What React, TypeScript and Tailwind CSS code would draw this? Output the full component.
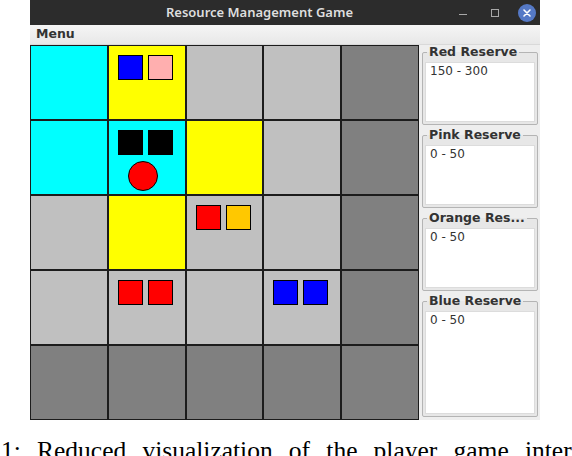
import React from 'react';

type Piece = 'red' | 'pink' | 'orange' | 'blue' | 'black';

const CELL_BG: Record<string, string> = {
  c: 'bg-[#00ffff]',
  y: 'bg-[#ffff00]',
  l: 'bg-[#c0c0c0]',
  g: 'bg-[#808080]',
};

const PIECE_BG: Record<Piece, string> = {
  red: 'bg-[#ff0000] border border-black',
  pink: 'bg-[#ffafaf] border border-black',
  orange: 'bg-[#ffc800] border border-black',
  blue: 'bg-[#0000ff] border border-black',
  black: 'bg-black',
};

const BOARD = [
  ['c', 'y', 'l', 'l', 'g'],
  ['c', 'c', 'y', 'l', 'g'],
  ['l', 'y', 'l', 'l', 'g'],
  ['l', 'l', 'l', 'l', 'g'],
  ['g', 'g', 'g', 'g', 'g'],
];

// pieces on a cell, keyed "row-col"
const PIECES: Record<string, { squares: Piece[]; unit?: boolean }> = {
  '0-1': { squares: ['blue', 'pink'] },
  '1-1': { squares: ['black', 'black'], unit: true },
  '2-2': { squares: ['red', 'orange'] },
  '3-1': { squares: ['red', 'red'] },
  '3-3': { squares: ['blue', 'blue'] },
};

const RESERVES = [
  { title: 'Red Reserve', value: '150 - 300' },
  { title: 'Pink Reserve', value: '0 - 50' },
  { title: 'Orange Res...', value: '0 - 50' },
  { title: 'Blue Reserve', value: '0 - 50' },
];

function Cell({ kind, row, col }: { kind: string; row: number; col: number }) {
  const content = PIECES[`${row}-${col}`];
  return (
    <div className={`${CELL_BG[kind]} border border-[#1c1c1c] pl-[9px] pt-[9px]`}>
      {content ? (
        <>
          <div className="flex gap-[5px]">
            {content.squares.map((p, i) => (
              <div key={i} className={`h-[25px] w-[25px] ${PIECE_BG[p]}`} />
            ))}
          </div>
          {content.unit ? (
            <div className="ml-[10px] mt-[6px] h-[30px] w-[30px] rounded-full border border-black bg-[#ff0000]" />
          ) : null}
        </>
      ) : null}
    </div>
  );
}

function Reserve({ title, value, grow }: { title: string; value: string; grow?: boolean }) {
  return (
    <fieldset
      className={`flex flex-col rounded-[2px] border border-[#b4b4b4] bg-[#e7e7e7] ${grow ? 'flex-1' : 'h-[80px]'}`}
    >
      <legend className="ml-[4px] px-[2px] text-[12.5px] font-bold leading-[14px] text-[#333]">{title}</legend>
      <div
        className={`mx-[2px] mb-[2px] mt-[3px] border border-[#dcdcdc] bg-white px-[4px] pt-[1px] text-[12px] leading-[14px] text-[#333] ${
          grow ? 'flex-1' : 'h-[60px]'
        }`}
      >
        {value}
      </div>
    </fieldset>
  );
}

export default function App() {
  return (
    <div className="h-[456px] w-[572px] overflow-hidden bg-white font-['DejaVu_Sans',sans-serif]">
      <div className="ml-[30px] w-[510px]">
        {/* title bar */}
        <div className="flex h-[25px] items-center bg-[#2c2c2c]">
          <div className="flex-1 pl-[30px] text-center font-['Noto_Sans',sans-serif] text-[13px] font-semibold text-[#dedede]">
            Resource Management Game
          </div>
          <div className="flex w-[81px] items-center">
            <div className="mt-[4px] h-[1px] w-[8px] bg-[#a8a8a8]" />
            <div className="ml-[24px] h-[8px] w-[8px] border border-[#a8a8a8]" />
            <div className="ml-[19px] flex h-[18px] w-[18px] items-center justify-center rounded-full bg-[#5579c6]">
              <svg width="10" height="10" viewBox="0 0 10 10">
                <path d="M2 2 L8 8 M8 2 L2 8" stroke="white" strokeWidth="1.6" strokeLinecap="round" />
              </svg>
            </div>
          </div>
        </div>

        {/* menu bar */}
        <div className="flex h-[20px] items-center border-b border-[#d9d9d9] bg-gradient-to-b from-[#f5f5f5] to-[#e8e8e8] pl-[6px] text-[12.5px] font-bold text-[#333]">
          Menu
        </div>

        {/* content */}
        <div className="flex h-[375px] bg-[#eeeeee]">
          <div className="grid h-[375px] w-[389px] grid-cols-5 grid-rows-5">
            {BOARD.map((row, r) => row.map((kind, c) => <Cell key={`${r}-${c}`} kind={kind} row={r} col={c} />))}
          </div>
          <div className="flex flex-1 flex-col gap-[3px] pb-[3px] pl-[3px] pr-[2px]">
            {RESERVES.map((res, i) => (
              <Reserve key={res.title} title={res.title} value={res.value} grow={i === RESERVES.length - 1} />
            ))}
          </div>
        </div>
      </div>

      {/* caption */}
      <div className="mt-[18px] whitespace-nowrap pl-[1px] font-['Liberation_Serif',serif] text-[25.5px] leading-[25.5px] text-black [word-spacing:9.8px]">
        1: Reduced visualization of the player game interface
      </div>
    </div>
  );
}
